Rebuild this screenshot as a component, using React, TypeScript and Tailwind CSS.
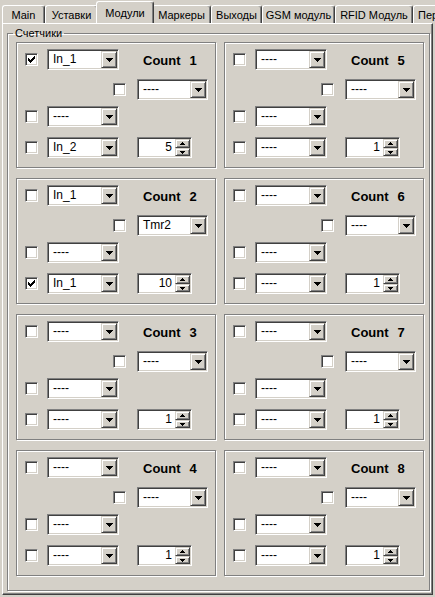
import React from "react";

type Counter = {
  n: number;
  c1: boolean;
  in1: string;
  sel2: string;
  in3: string;
  c4: boolean;
  in4: string;
  val: number;
};

const EMPTY = "----";

function mk(n: number, extra: Partial<Counter> = {}): Counter {
  return { n, c1: false, in1: EMPTY, sel2: EMPTY, in3: EMPTY, c4: false, in4: EMPTY, val: 1, ...extra };
}

const counters: Counter[] = [
  mk(1, { c1: true, in1: "In_1", in4: "In_2", val: 5 }),
  mk(5),
  mk(2, { in1: "In_1", sel2: "Tmr2", c4: true, in4: "In_1", val: 10 }),
  mk(6),
  mk(3),
  mk(7),
  mk(4),
  mk(8),
];

const tabs = [
  { label: "Main", w: "w-[43px] justify-center" },
  { label: "Уставки", w: "w-[53px] justify-center" },
  { label: "Модули", w: "w-[58px] justify-center", active: true },
  { label: "Маркеры", w: "w-[59px] justify-center" },
  { label: "Выходы", w: "w-[51px] justify-center" },
  { label: "GSM модуль", w: "w-[73px] justify-center" },
  { label: "RFID Модуль", w: "w-[78px] justify-center" },
  { label: "Пер", w: "w-[40px] justify-start pl-[4px]" },
];

function Check({ checked }: { checked?: boolean }) {
  return (
    <div className="flex h-[13px] w-[13px] shrink-0 items-center justify-center border border-[#808080] border-b-white border-r-white bg-white shadow-[inset_1px_1px_0_#404040,inset_-1px_-1px_0_#d4d0c8]">
      {checked && (
        <svg width="7" height="7" viewBox="0 0 7 7" shapeRendering="crispEdges">
          <path d="M6 0h1v3h-1v1h-1v1h-1v1h-1v1h-1v-1h-1v-1h-1v-3h1v1h1v1h1v-1h1v-1h1z" fill="#000" />
        </svg>
      )}
    </div>
  );
}

function RaisedBtn({ className, children }: { className: string; children: React.ReactNode }) {
  return (
    <div
      className={`flex items-center justify-center border border-[#d4d0c8] border-b-[#404040] border-r-[#404040] bg-[#d4d0c8] shadow-[inset_1px_1px_0_#fff,inset_-1px_-1px_0_#808080] ${className}`}
    >
      {children}
    </div>
  );
}

function Combo({ value, w }: { value: string; w: string }) {
  return (
    <div
      className={`flex h-[21px] shrink-0 border border-[#808080] border-b-white border-r-white bg-white p-px shadow-[inset_1px_1px_0_#404040,inset_-1px_-1px_0_#d4d0c8] ${w}`}
    >
      <span className="flex-1 pl-[4px] text-[12px] leading-[17px]">{value}</span>
      <RaisedBtn className="h-[17px] w-[16px]">
        <svg width="7" height="4" viewBox="0 0 7 4" shapeRendering="crispEdges">
          <path d="M0 0h7v1h-1v1h-1v1h-1v1h-1v-1h-1v-1h-1v-1h-1z" fill="#000" />
        </svg>
      </RaisedBtn>
    </div>
  );
}

function Spin({ value }: { value: number }) {
  return (
    <div className="flex h-[21px] w-[55px] shrink-0 border border-[#808080] border-b-white border-r-white bg-white p-px shadow-[inset_1px_1px_0_#404040,inset_-1px_-1px_0_#d4d0c8]">
      <span className="flex-1 pr-[3px] text-right text-[12px] leading-[17px]">{value}</span>
      <div className="flex w-[15px] flex-col">
        <RaisedBtn className="h-[9px] w-[15px]">
          <svg width="5" height="3" viewBox="0 0 5 3" shapeRendering="crispEdges">
            <path d="M2 0h1v1h1v1h1v1h-5v-1h1v-1h1z" fill="#000" />
          </svg>
        </RaisedBtn>
        <RaisedBtn className="h-[8px] w-[15px]">
          <svg width="5" height="3" viewBox="0 0 5 3" shapeRendering="crispEdges">
            <path d="M0 0h5v1h-1v1h-1v1h-1v-1h-1v-1h-1z" fill="#000" />
          </svg>
        </RaisedBtn>
      </div>
    </div>
  );
}

function CounterBox({ c }: { c: Counter }) {
  return (
    <div className="flex h-[126px] w-[200px] flex-col border border-[#808080] pt-[6px] pl-[8px] shadow-[inset_1px_1px_0_#fff,1px_1px_0_#fff]">
      <div className="flex h-[21px] items-center">
        <Check checked={c.c1} />
        <div className="ml-[9px]">
          <Combo value={c.in1} w="w-[72px]" />
        </div>
        <div className="ml-[24px] mt-[2px] flex gap-[9px] text-[13px] font-bold">
          <span>Count</span>
          <span>{c.n}</span>
        </div>
      </div>
      <div className="mt-[9px] flex h-[21px] items-center pl-[88px]">
        <Check />
        <div className="ml-[11px]">
          <Combo value={c.sel2} w="w-[71px]" />
        </div>
      </div>
      <div className="mt-[6px] flex h-[21px] items-center">
        <Check />
        <div className="ml-[9px]">
          <Combo value={c.in3} w="w-[72px]" />
        </div>
      </div>
      <div className="mt-[10px] flex h-[21px] items-center">
        <Check checked={c.c4} />
        <div className="ml-[9px]">
          <Combo value={c.in4} w="w-[72px]" />
        </div>
        <div className="ml-[18px]">
          <Spin value={c.val} />
        </div>
      </div>
    </div>
  );
}

export default function App() {
  return (
    <div className="flex h-[597px] w-[435px] flex-col overflow-hidden bg-[#d4d0c8] font-['Liberation_Sans',Arial,sans-serif] text-[11px] text-black">
      <div className="relative z-10 flex h-[23px] shrink-0 items-end overflow-hidden pl-[2px]">
        {tabs.map((t) =>
          t.active ? (
            <div
              key={t.label}
              className={`relative z-10 -mx-[2px] -mb-px flex h-[23px] shrink-0 rounded-t-[3px] border-l border-t border-r border-white border-r-[#404040] bg-[#d4d0c8] pt-[3px] shadow-[inset_-1px_0_0_#808080] ${t.w}`}
            >
              {t.label}
            </div>
          ) : (
            <div
              key={t.label}
              className={`flex h-[18px] shrink-0 overflow-hidden rounded-t-[3px] border-l border-t border-r border-white border-r-[#404040] bg-[#d4d0c8] pt-[1px] shadow-[inset_-1px_0_0_#808080] ${t.w}`}
            >
              <span className="whitespace-nowrap">{t.label}</span>
            </div>
          )
        )}
      </div>
      <div className="mx-[2px] h-[572px] shrink-0 border border-white border-b-[#404040] border-r-[#404040] pl-[4px] pt-[3px] shadow-[inset_-1px_-1px_0_#808080]">
        <fieldset className="h-[564px] w-[423px] border border-[#808080] shadow-[inset_1px_1px_0_#fff,1px_1px_0_#fff]">
          <legend className="ml-[5px] px-[2px] leading-[13px]">Счетчики</legend>
          <div className="grid grid-cols-[200px_200px] gap-x-[8px] gap-y-[10px] pl-[8px] pt-[2px]">
            {counters.map((c) => (
              <CounterBox key={c.n} c={c} />
            ))}
          </div>
        </fieldset>
      </div>
    </div>
  );
}
